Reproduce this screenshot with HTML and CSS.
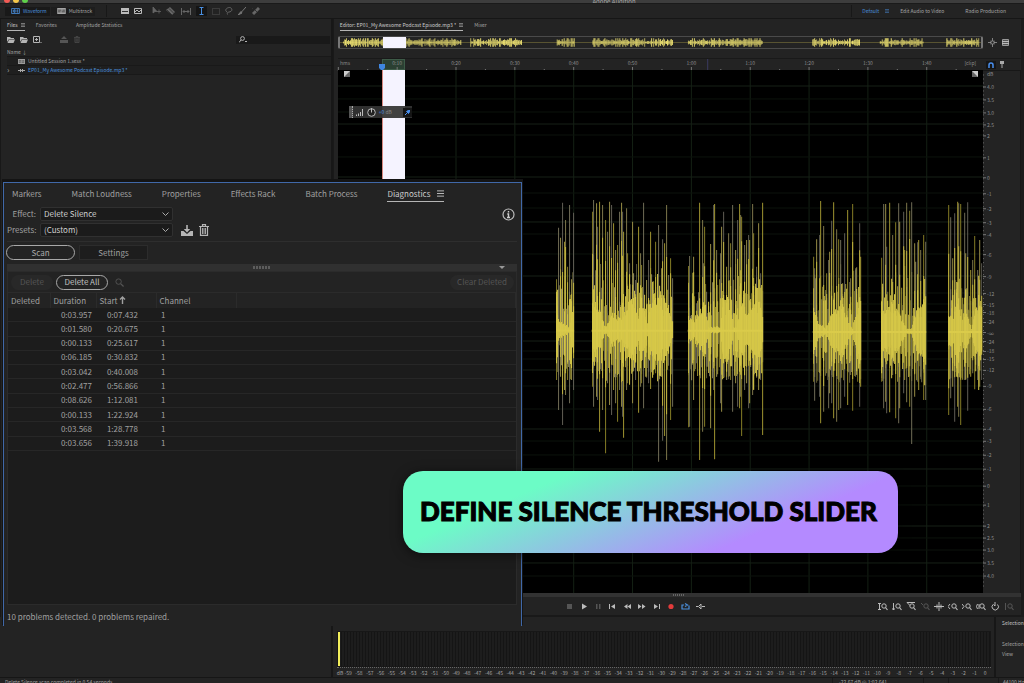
FILE: index.html
```html
<!DOCTYPE html>
<html lang="en">
<head>
<meta charset="utf-8">
<title>Adobe Audition</title>
<link rel="stylesheet" href="styles.css">
</head>
<body>
<svg class="defs" aria-hidden="true">
  <symbol id="menu" viewBox="0 0 8 8"><path d="M0 1h8M0 4h8M0 7h8" stroke="currentColor" fill="none"/></symbol>
  <symbol id="wave" viewBox="0 0 10 7"><path d="M.5.5h9v6h-9z" stroke="currentColor" fill="none"/><path d="M2.500 2v3M4 1v5M5.500 2v3M7.500 1.500v4" stroke="currentColor"/></symbol>
  <symbol id="multi" viewBox="0 0 10 7"><path d="M0 0h10v7H0z" fill="currentColor"/><path d="M1 2.500h4M6 2.500h3M1 4.500h3M5 4.500h4" stroke="#333"/></symbol>
  <symbol id="mag" viewBox="0 0 10 10"><circle cx="4" cy="4" r="3" fill="none" stroke="currentColor"/><path d="M6.200 6.200 9.500 9.500" stroke="currentColor" stroke-width="1.400"/></symbol>
  <symbol id="folder" viewBox="0 0 8 6"><path d="M0 0h3l1 1h3v1H2L0 5z" fill="currentColor"/><path d="M2 2.500h6L6.500 6H.5z" fill="currentColor"/></symbol>
  <symbol id="trash" viewBox="0 0 10 12"><path d="M0 2.500h10M3.500 2V.7h3V2M1.500 3v8.300h7V3" fill="none" stroke="currentColor" stroke-width="1.200"/><path d="M3.500 4v6M5 4v6M6.500 4v6" stroke="currentColor" stroke-width=".9"/></symbol>
</svg>

<header class="titlebar">
  <span class="lights"><i class="red"></i><i class="amber"></i><i class="green"></i></span>
  <span class="title">Adobe Audition</span>
</header>

<nav class="toolbar">
  <div class="modes">
    <button class="mode on"><svg width="9" height="6"><use href="#wave"/></svg>Waveform</button>
    <button class="mode"><svg width="9" height="6"><use href="#multi"/></svg>Multitrack</button>
  </div>
  <div class="tools">
    <svg width="8" height="6" viewBox="0 0 8 6"><path d="M0 0h8v6H0z" fill="#bbb"/><path d="M1 3.500h6" stroke="#333"/></svg>
    <svg width="8" height="6" viewBox="0 0 8 6"><path d="M.5.5h7v5h-7zM1 4l2-2 2 2 2-2" fill="none" stroke="#bbb"/></svg>
    <svg class="dim gap" width="9" height="8" viewBox="0 0 9 8"><path d="M1 0v6l2-1.500h2zM5 4.500h4M7 2.500v4" fill="#666" stroke="#666" stroke-width=".8"/></svg>
    <svg width="10" height="8" viewBox="0 0 10 8"><path d="M0 3 4 0l5 5-3 3z" fill="#666"/><path d="m1 3 5 5M3 1.500l5 5" stroke="#222" stroke-width=".7"/></svg>
    <svg width="10" height="7" viewBox="0 0 10 7"><path d="M.5 0v7M9.500 0v7M2 3.500h6M3.500 2 2 3.500 3.500 5M6.500 2 8 3.500 6.500 5" fill="none" stroke="#666"/></svg>
    <span class="picked"><svg width="5" height="8" viewBox="0 0 5 8"><path d="M.5.5h4M2.500.5v7M.5 7.500h4" stroke="#4a90e2"/></svg></span>
    <svg width="8" height="7" viewBox="0 0 8 7"><path d="M.5.5h7v6h-7z" fill="none" stroke="#555" stroke-dasharray="1 1"/></svg>
    <svg width="8" height="8" viewBox="0 0 8 8"><path d="M2 5C-1 3 2 .5 4.500.5S8 4 5 4.800 2 5 2.500 7.500" fill="none" stroke="#666"/></svg>
    <svg width="8" height="8" viewBox="0 0 8 8"><path d="M8 0 3.500 5M3 4.500 0 8l4-2z" fill="#777" stroke="#777"/></svg>
    <svg width="9" height="8" viewBox="0 0 9 8"><path d="M8 1 2 7" stroke="#666" stroke-width="3"/><path d="M4 3l2 2M1 1l1 1" stroke="#333"/></svg>
  </div>
  <div class="spaces">
    <a href="#default" class="on">Default</a><svg class="on" width="4" height="4"><use href="#menu"/></svg>
    <a href="#video">Edit Audio to Video</a>
    <a href="#radio">Radio Production</a>
  </div>
</nav>

<main class="workspace">
  <section class="files">
    <div class="tabs small">
      <button class="tab on">Files <svg width="4" height="4"><use href="#menu"/></svg></button>
      <button class="tab">Favorites</button>
      <button class="tab">Amplitude Statistics</button>
    </div>
    <div class="filetools">
      <svg width="8" height="6"><use href="#folder"/></svg>
      <svg width="8" height="6"><use href="#folder"/></svg>
      <svg width="9" height="7" viewBox="0 0 9 7"><path d="M.5.5h6v6h-6zM3.500 2v3M2 3.500h3" fill="none" stroke="currentColor"/><path d="M7.500 6h1v1h-1z" fill="currentColor"/></svg>
      <svg class="dim gap" width="9" height="7" viewBox="0 0 9 7"><path d="M0 4h8v3H0zM4 0l3 3H1z" fill="currentColor"/></svg>
      <svg class="dim" width="6" height="7"><use href="#trash"/></svg>
      <label class="filter"><svg width="9" height="7" viewBox="0 0 9 7"><circle cx="3.500" cy="2.500" r="1.900" fill="none" stroke="currentColor"/><path d="M2 4 0 6.500M6 5.500h2" stroke="currentColor"/></svg><input type="text" aria-label="Search files"></label>
    </div>
    <div class="namehead">Name ↓</div>
    <ul class="filelist">
      <li><svg width="7" height="5"><use href="#multi"/></svg>Untitled Session 1.sesx *</li>
      <li class="on"><span class="twist">›</span><svg width="7" height="5" viewBox="0 0 7 5"><path d="M0 2.500h7M2.500 1v3M4.500 1v3" stroke="#aaa"/></svg>EP01_My Awesome Podcast Episode.mp3 *</li>
    </ul>
  </section>

  <section class="editor">
    <div class="tabs small">
      <button class="tab on">Editor: EP01_My Awesome Podcast Episode.mp3 * <svg width="4" height="4"><use href="#menu"/></svg></button>
      <button class="tab">Mixer</button>
    </div>
    <div class="overview">
      <div class="track"><svg id="mini" viewBox="0 0 1935 36" preserveAspectRatio="none"></svg><i class="range"></i></div>
      <div class="side">
        <svg width="9" height="9" viewBox="0 0 9 9"><path d="M0 4.500h9M4.500 0v9M3 2.500v4M6 2.500v4" stroke="#999" stroke-width=".8"/><circle cx="4.500" cy="4.500" r="1.500" fill="#232323" stroke="#999" stroke-width=".7"/></svg>
        <svg width="7" height="7" viewBox="0 0 7 7"><path d="M.5.5h6v6h-6z" fill="#555" stroke="#999"/><path d="M0 2.500h7M0 4.500h7" stroke="#bbb"/></svg>
      </div>
    </div>
    <div class="timeline">
      <div class="ruler"><i class="range"></i><svg id="ticks"></svg></div>
      <div class="side">
        <span class="snap"><svg width="6" height="6" viewBox="0 0 6 6"><path d="M1 6V3a2 2 0 0 1 4 0v3" fill="none" stroke="#4a90f0" stroke-width="1.500"/></svg></span>
        <svg width="4" height="7" viewBox="0 0 4 7"><path d="M0 0h4v3H2.500v4h-1V3H0z" fill="#aaa"/></svg>
      </div>
    </div>
    <div class="stage">
      <div class="canvas">
        <svg id="grid"></svg>
        <i class="range"></i>
        <svg id="waveform" viewBox="0 0 1935 1569" preserveAspectRatio="none"></svg>
        <svg class="fade left" viewBox="0 0 6 6"><path d="M0 0h6v6H0z" fill="#666"/><path d="M0 0h6L0 6z" fill="#ccc"/></svg>
        <svg class="fade right" viewBox="0 0 6 6"><path d="M0 0h6v6H0z" fill="#666"/><path d="M0 0h6v6z" fill="#ccc"/></svg>
        <div class="hud">
          <span class="grip"></span>
          <svg width="8" height="7" viewBox="0 0 8 7"><path d="M.5 5.500V7M2.500 4.500V7M4.500 3v4M6.500 0v7" stroke="#bbb"/></svg>
          <svg width="9" height="9" viewBox="0 0 9 9"><circle cx="4.500" cy="4.500" r="3.800" fill="#222" stroke="#bbb"/><path d="M4.500 0v4.500" stroke="#bbb"/></svg>
          <span class="gain">+0 <em>dB</em></span>
          <span class="pin"><svg width="5" height="5" viewBox="0 0 5 5"><path d="M0 5 2 3M1.500 1.500l2 2L5 1 4 0z" stroke="#4a90f0" fill="#4a90f0"/></svg></span>
        </div>
      </div>
      <svg id="db"></svg>
    </div>
    <div class="scroll"><i></i></div>
    <div class="transport">
      <div class="play" id="play"></div>
      <div class="zooms" id="zooms"></div>
    </div>
  </section>
</main>

<section class="dock">
  <div class="blank"></div>
  <div class="levels">
    <div class="meter"><i></i></div>
    <div class="scale" id="scale"><span class="unit">dB</span></div>
  </div>
  <div class="selview"><b>Selection</b><span>Selection</span><span>View</span></div>
</section>

<footer class="status">
  <span>Delete Silence scan completed in 0.54 seconds</span>
  <span class="level">-22.67 dB @ 1:02.641</span><span class="cell"></span><span class="cell wide"></span><span class="rate">44100 Hz</span>
</footer>

<section class="diag">
  <div class="tabs">
    <button class="tab">Markers</button>
    <button class="tab">Match Loudness</button>
    <button class="tab">Properties</button>
    <button class="tab">Effects Rack</button>
    <button class="tab">Batch Process</button>
    <button class="tab on">Diagnostics <svg width="7" height="7"><use href="#menu"/></svg></button>
  </div>
  <div class="form">
    <label for="effect">Effect:</label>
    <select id="effect"><option>Delete Silence</option></select>
    <svg class="info" width="13" height="13" viewBox="0 0 13 13"><circle cx="6.500" cy="6.500" r="5.500" fill="none" stroke="#bbb" stroke-width="1.200"/><path d="M6.500 3v1.500M5.300 6h1.200v3.500M5 9.500h3" stroke="#ccc" stroke-width="1.400" fill="none"/></svg>
    <label for="preset">Presets:</label>
    <select id="preset"><option>(Custom)</option></select>
    <span class="presettools">
      <button class="icon" aria-label="Save preset"><svg width="12" height="11" viewBox="0 0 12 11"><path d="M5.200 0h1.600v4h2.400L6 7.500 2.800 4h2.400z" fill="currentColor"/><path d="M0 6h2.500L6 9l3.500-3H12v5H0z" fill="currentColor"/></svg></button>
      <button class="icon" aria-label="Delete preset"><svg width="10" height="12"><use href="#trash"/></svg></button>
    </span>
  </div>
  <div class="modesrow"><button class="pill big">Scan</button><button class="flat">Settings</button></div>
  <div class="split"><i></i><b></b></div>
  <div class="list">
    <div class="actions">
      <button class="ghost" disabled>Delete</button>
      <button class="pill all">Delete All</button>
      <svg class="find" width="9" height="9"><use href="#mag"/></svg>
      <button class="ghost last" disabled>Clear Deleted</button>
    </div>
    <table class="problems">
      <colgroup><col class="c1"><col class="c2"><col class="c3"><col class="c4"><col></colgroup>
      <thead><tr><th>Deleted</th><th>Duration</th><th>Start<svg width="7" height="8" viewBox="0 0 7 8"><path d="M3.500 8V1M1 3.500 3.500 1 6 3.500" fill="none" stroke="currentColor" stroke-width="1.400"/></svg></th><th>Channel</th><th></th></tr></thead>
      <tbody>
        <tr><td></td><td>0:03.957</td><td>0:07.432</td><td>1</td><td></td></tr>
        <tr><td></td><td>0:01.580</td><td>0:20.675</td><td>1</td><td></td></tr>
        <tr><td></td><td>0:00.133</td><td>0:25.617</td><td>1</td><td></td></tr>
        <tr><td></td><td>0:06.185</td><td>0:30.832</td><td>1</td><td></td></tr>
        <tr><td></td><td>0:03.042</td><td>0:40.008</td><td>1</td><td></td></tr>
        <tr><td></td><td>0:02.477</td><td>0:56.866</td><td>1</td><td></td></tr>
        <tr><td></td><td>0:08.626</td><td>1:12.081</td><td>1</td><td></td></tr>
        <tr><td></td><td>0:00.133</td><td>1:22.924</td><td>1</td><td></td></tr>
        <tr><td></td><td>0:03.568</td><td>1:28.778</td><td>1</td><td></td></tr>
        <tr><td></td><td>0:03.656</td><td>1:39.918</td><td>1</td><td></td></tr>
      </tbody>
    </table>
  </div>
  <p class="result">10 problems detected. 0 problems repaired.</p>
</section>

<h1 class="callout">DEFINE SILENCE THRESHOLD SLIDER</h1>
<script src="app.js"></script>
</body>
</html>
```
FILE: styles.css
```css
* { box-sizing: border-box; }
body {
  margin: 0; height: 100vh; display: flex; flex-direction: column; overflow: hidden; position: relative;
  background: #232323; color: #a4a4a4;
  font: 5px/8px "Noto Sans CJK SC", "Noto Sans", sans-serif;
}
button, input, select { font: inherit; color: inherit; background: none; border: 0; padding: 0; margin: 0; }
a { color: inherit; text-decoration: none; }
svg { flex: none; display: block; }
.defs { position: absolute; width: 0; height: 0; }
.on { color: #4a8fdc; }

.titlebar { flex: none; height: 4px; background: #3d3d3d; border-bottom: 1px solid #1a1a1a; overflow: hidden; position: relative; }
.lights { position: absolute; left: 4px; top: -3px; display: flex; gap: 3px; }
.lights i { width: 6px; height: 6px; border-radius: 50%; }
.red { background: #f35b55; } .amber { background: #f5c84b; } .green { background: #5fd04b; }
.title { display: block; text-align: center; padding-left: 204px; line-height: 3px; color: #aaa; white-space: nowrap; font-size: 6px; }

.toolbar { flex: none; height: 15px; display: flex; align-items: center; border-bottom: 1px solid #161616; padding: 0 18px 0 5px; }
.modes { display: flex; gap: 1px; padding-right: 11px; border-right: 1px solid #181818; height: 12px; align-items: center; }
.mode { display: flex; gap: 3px; align-items: center; height: 9px; padding: 0 3px 0 6px; background: #1d1d1d; }
.mode.on { background: #191919; }
.tools { display: flex; gap: 5px; align-items: center; padding-left: 14px; flex: 1; }
.tools .gap { margin-left: 5px; }
.picked { background: #151515; padding: 1px 3px; }
.spaces { display: flex; align-items: center; height: 12px; padding-left: 10px; border-left: 1px solid #181818; }
.spaces svg { margin: 0 11px 0 6px; }
.spaces a + a { margin-left: 21px; }

.workspace { flex: 1; min-height: 0; display: grid; grid-template-columns: 32.5% minmax(0, 1fr); }
.files { border-right: 2px solid #171717; padding-left: 6px; border-left: 1px solid #181818; }
.tabs { display: flex; }
.tab { display: flex; align-items: center; white-space: nowrap; border-bottom: 1px solid transparent; }
.small .tab { height: 12px; gap: 3px; }
.tab.on { color: #ccc; border-color: #b5b5b5; }
.files .tabs { gap: 11px; }
.files .tab:last-child { margin-left: 8px; }
.filetools { display: flex; align-items: center; gap: 5px; height: 17px; color: #b5b5b5; }
.filetools .gap { margin-left: 13px; }
.dim { color: #555; }
.filter { margin-left: auto; width: 94px; height: 8px; background: #191919; display: flex; align-items: center; padding-left: 3px; margin-right: 1px; }
.filter input { flex: 1; min-width: 0; height: 8px; }
.namehead { height: 8px; line-height: 8px; }
.filelist { list-style: none; margin: 0; padding: 0; border-bottom: 1px solid #191919; }
.filelist li { height: 9px; border-top: 1px solid #191919; display: flex; align-items: center; gap: 3px; padding-left: 11px; background: #1f1f1f; }
.filelist li + li { padding-left: 0; }
.twist { width: 8px; color: #aaa; font-size: 8px; }

.editor { display: flex; flex-direction: column; min-width: 0; padding-left: 4px; border-left: 1px solid #191919; border-right: 3px solid #1b1b1b; }
.editor .tabs { gap: 11px; padding-left: 2px; }
.overview { display: flex; margin-top: 5px; height: 13px; }
.track { flex: 1; position: relative; border: 1px solid #4a4a4a; border-left: 2px solid #777; border-right: 2px solid #777; border-radius: 2px; }
.track svg { position: absolute; width: 100%; height: 100%; }
.side { width: 38px; display: flex; align-items: center; gap: 5px; padding-left: 5px; }
.range { position: absolute; width: 3.6%; left: 6.8%; top: 0; bottom: 0; background: #f5f3ff; }
.timeline { display: flex; height: 12px; margin-top: 9px; border-top: 1px solid #191919; }
.timeline .side { gap: 4px; padding-left: 3px; }
.ruler { flex: 1; position: relative; }
.ruler .range { background: #2b4033; border: 1px solid #3d5a47; }
.ruler svg { position: relative; width: 100%; height: 100%; overflow: visible; }
.snap { background: #161616; padding: 1px 2px; }
.stage { flex: 1; min-height: 0; display: flex; }
.canvas { flex: 1; position: relative; background: #000; }
.canvas .range { border-left: 1px solid #d98880; }
#grid, #waveform { position: absolute; width: 100%; height: 100%; }
#db { width: 38px; height: 100%; border-top: 1px solid #171717; border-right: 1px solid #171717; }
text { fill: #8c8c8c; font-size: 5px; }
.fade { position: absolute; top: 1px; width: 6px; height: 6px; }
.fade.left { left: 6px; } .fade.right { right: 5px; }
.hud { position: absolute; left: 11px; top: 36px; height: 12px; display: flex; align-items: center; gap: 3px; background: #333e; }
.grip { width: 4px; height: 12px; background: #555; border-right: 1px dotted #aaa; }
.gain { color: #4a90e2; padding-right: 8px; } .gain em { color: #888; font-style: normal; }
.pin { background: #151515; padding: 2px; }
.scroll { height: 4px; background: #323232; display: flex; justify-content: center; align-items: center; }
.scroll i { width: 12px; height: 2px; background: repeating-linear-gradient(90deg, #666 0 1px, #323232 1px 2px); }
.transport { height: 20px; display: flex; align-items: center; border-bottom: 2px solid #191919; color: #bbb; }
.play { display: flex; align-items: center; gap: 6px; padding-left: 228px; flex: 1; }
.zooms { display: flex; gap: 4px; padding-right: 7px; }
.off { color: #555; }

.dock { flex: none; height: 60px; display: grid; grid-template-columns: 32.5% minmax(0, 1fr) 28px; }
.blank { border-right: 2px solid #171717; }
.levels { padding: 14px 3px 0 4px; border-right: 2px solid #171717; }
.meter { height: 36px; border: 1px solid #171717; background: repeating-linear-gradient(90deg, #151515 0 1px, #1d1d1d 1px 3px); }
.meter i { display: block; width: 2px; height: 34px; background: #f2ee5a; }
.scale { display: flex; height: 10px; border-top: 1px dotted #666; font-size: 5px; line-height: 9px; }
.scale span { flex: 1 1 0; min-width: 0; text-align: center; }
.scale .unit { flex: none; width: 6px; }
.selview { display: flex; flex-direction: column; padding-left: 6px; white-space: nowrap; line-height: 10px; }
.selview b { font-weight: 400; color: #c4c4c4; padding: 1px 0 11px; }
.status { flex: none; height: 6px; border-top: 1px solid #161616; display: flex; overflow: hidden; padding-left: 5px; white-space: nowrap; }
.status span:first-child { flex: 1; }
.level { width: 91px; padding-left: 6px; border-left: 1px solid #181818; }
.cell { width: 25px; border-left: 1px solid #181818; }
.cell.wide { width: 50px; }
.rate { width: 26px; padding-left: 4px; border-left: 1px solid #181818; }

.diag {
  position: absolute; left: 3px; top: 182px; bottom: 57px; width: 519px; display: flex; flex-direction: column;
  background: #232323; border: solid #4068a8; border-width: 1px 1px 0; box-shadow: 0 -2px 0 1px #141414;
  font-size: 8px; line-height: 12px; padding: 0 4px 0 3px; color: #a0a0a0;
}
.diag .tabs { gap: 30px; padding: 3px 5px 0; height: 19px; }
.diag .tab { height: 16px; gap: 7px; }
.form { display: grid; grid-template-columns: 30px 133px 1fr; column-gap: 3px; row-gap: 2px; padding: 5px 2px 4px 0; align-items: center; border-bottom: 1px solid #2e2e2e; }
.form label { text-align: right; margin-right: 1px; white-space: nowrap; }
.form select {
  height: 14px; appearance: none; border: 1px solid #303030; border-radius: 2px; padding-left: 3px; color: #d0d0d0; line-height: 12px;
  background: #1b1b1b url("data:image/svg+xml,%3Csvg xmlns='http://www.w3.org/2000/svg' width='7' height='5'%3E%3Cpath d='M.5.5l3 3 3-3' fill='none' stroke='%23aaa'/%3E%3C/svg%3E") no-repeat right 3px center;
}
.info { justify-self: end; }
.presettools { display: flex; gap: 6px; padding-left: 5px; }
.icon { color: #b5b5b5; }
.modesrow { display: flex; gap: 4px; padding: 3px 0 4px; }
.pill { height: 15px; border: 1px solid #a8a8a8; border-radius: 8px; line-height: 12px; color: #c0c0c0; }
.pill.all { width: 52px; }
.pill.big { width: 69px; color: #aaa; margin-left: -1px; }
.flat { width: 69px; height: 15px; border: 1px solid #2c2c2c; background: #1d1d1d; line-height: 12px; }
.split { height: 7px; background: #303030; display: flex; align-items: center; justify-content: center; position: relative; }
.split i { width: 18px; height: 3px; background: repeating-linear-gradient(90deg, #5c5c5c 0 2px, #303030 2px 3px); }
.split b { position: absolute; right: 12px; top: 2px; border: 3px solid transparent; border-top-color: #999; border-bottom: 0; }
.list { flex: 1; min-height: 0; background: #1c1c1c; border: 1px solid #2b2b2b; }
.actions { background: #232323; display: flex; align-items: center; gap: 3px; height: 21px; padding: 0 2px 0 3px; border-bottom: 1px solid #2b2b2b; }
.ghost { width: 42px; height: 15px; border-radius: 8px; background: #282828; color: #555; line-height: 14px; }
.ghost.last { margin-left: auto; width: 64px; }
.find { color: #555; margin-left: 4px; }
.problems { width: 100%; height: 158px; border-collapse: collapse; table-layout: fixed; }
.problems thead tr { background: #232323; height: 15px; }
.c1 { width: 42px; } .c2 { width: 46px; } .c3 { width: 60px; } .c4 { width: 80px; }
th { font-weight: 400; text-align: left; padding: 0 0 0 3px; border-right: 1px solid #2b2b2b; white-space: nowrap; }
th svg { display: inline-block; margin-left: 1px; }
td { padding: 0; border-bottom: 1px solid #272727; }
td:nth-child(2) { text-align: right; padding-right: 4px; }
td:nth-child(3) { text-align: right; padding-right: 18px; }
td:nth-child(4) { padding-left: 5px; }
.result { margin: 0; height: 21px; line-height: 24px; }

.callout {
  position: absolute; left: 403px; top: 471px; margin: 0; padding: 20px 21px 22px 17px; border-radius: 20px;
  background: linear-gradient(157deg, #6cfcc6 25%, #b48aff 73%); box-shadow: 0 2px 12px #0008;
  color: #000; font: 900 26px/40px Lato, sans-serif; -webkit-text-stroke: 1px #000; white-space: nowrap;
}
```
FILE: app.js
```js
const $ = id => document.getElementById(id);
let seed = 7;
const rnd = () => (seed = (seed * 16807) % 2147483647) / 2147483647;

// Peaks as [x, top, bottom]; each group is offset to the clip's own coordinates.
const groups = [
  { dx: 606, mid: 420, pts: [
    [[49,268,570],[55,113,660],[60,143,560],[66,38,705],[72,155,600],[77,90,615],[83,230,570],[89,45,640],[94,268,570],[100,68,600]],
    [[156,65,590],[160,30,650],[168,40,620],[173,110,630],[178,35,725],[186,45,660],[196,90,790],[203,125,580],[207,35,645],[215,45,675],[219,100,600],[226,180,640],[232,165,695],[239,65,600],[243,38,650],[247,65,680],[250,125,743],[258,55,600],[262,190,580],[268,220,570],[277,95,640],[285,270,570],[294,110,668],[300,190,590],[304,225,580],[311,38,655],[318,270,560],[325,210,580],[332,125,597],[340,300,540],[347,155,550],[354,105,815],[363,235,560],[368,148,752],[373,160,738],[378,45,810],[390,205,690],[396,265,650]],
    [[444,228,712],[449,198,710],[460,200,630],[470,340,520],[478,38,810],[487,90,725],[492,110,710],[500,305,530],[511,162,715],[520,45,600],[523,42,808],[528,180,560],[533,285,540],[540,190,640],[545,110,665],[550,65,560],[558,230,560],[566,130,560],[570,160,570],[576,45,665],[585,180,580],[591,90,650],[597,42,655],[600,75,620],[604,80,738],[612,165,600],[618,150,580],[625,135,655],[629,150,640],[636,42,615],[641,130,600],[648,230,560],[655,100,600],[660,250,570],[666,38,735]] ] },
  { dx: 1326, mid: 424, pts: [
    [[99,200,575],[103,235,632],[110,148,520],[117,135,620],[122,33,700],[130,108,665],[138,250,550],[145,210,655],[149,185,610],[155,92,640],[160,37,685],[169,118,695],[175,148,660],[180,150,655],[187,280,540],[193,130,620],[202,60,645],[211,265,555],[218,42,662],[226,235,560],[230,232,555],[238,100,650],[241,200,590]],
    [[305,203,575],[310,42,655],[317,42,635],[320,170,670],[329,38,667],[338,135,555],[347,97,685],[355,40,700],[358,95,655],[369,65,610],[374,180,570],[380,38,637],[389,62,650],[394,37,762],[403,160,620],[413,157,575],[416,150,600],[422,180,560],[431,135,630],[436,155,630]],
    [[505,45,675],[511,82,625],[517,205,590],[523,70,695],[532,35,650],[536,40,680],[542,42,705],[552,68,570],[557,190,570],[563,37,662],[570,240,560],[577,210,550],[584,138,598],[591,240,570],[598,150,590],[603,220,570]] ] }
];
const spikeColors = ['#8d8428', '#77735c', '#a0954a', '#67645a', '#a99d34', '#857d50'];
const softColors = ['#b3a73a', '#8f8960', '#99902f', '#d0c24a', '#7a7440', '#a59d70'];
const snap = x => Math.floor(x / 3) * 3 + 1.5;
const line = (x, a, b, w, c, o = 1) => `<path d="M${snap(x)} ${a.toFixed(0)}V${b.toFixed(0)}" stroke="${c}" stroke-width="${w}" opacity="${o.toFixed(2)}"/>`;
let out = '', minis = '';
const spans = [];
groups.forEach(g => g.pts.forEach(seg => {
  const x0 = seg[0][0], x1 = seg[seg.length - 1][0], m = g.mid + 360;
  spans.push([x0 + g.dx, x1 + g.dx]);
  for (let x = x0; x <= x1; x += 3) {
    const up = 40 + rnd() * rnd() * 190, down = 40 + rnd() * 115;
    out += line(x + g.dx, m - up, m + down, 3, softColors[Math.floor(rnd() * 6)], .6 + rnd() * .35);
  }
  seg.forEach(([x, t, b], i) => {
    const X = x + g.dx, T = t + 360, B = b + 360;
    out += line(X, T, B, 3, spikeColors[i % 6], .95);
    if (i % 3 !== 1) out += line(X, m - (m - T) * (.4 + rnd() * .4), m + (B - m) * (.4 + rnd() * .3), 3, '#cbbd40', .9);
  });
  // Loud syllables swell and fade between anchor points.
  let from = 40 + rnd() * 60, to = 20 + rnd() * 90, k = 0, len = 6;
  for (let x = x0; x <= x1 + 1; x += 3) {
    if (k++ >= len) { from = to; to = rnd() < .35 ? 8 : 30 + rnd() * 75; k = 1; len = 3 + Math.floor(rnd() * 6); }
    const c = Math.max(5, (from + (to - from) * k / len) * (.7 + rnd() * .5));
    out += line(x + g.dx, m - c * 1.15, m + c * 1.1, 3, '#dacb4a');
    if (rnd() < .3) out += line(x + g.dx, m - c - 30 - rnd() * 60, m + c + 30 + rnd() * 60, 3, '#d5c747');
  }
  out += `<path d="M${x0 + g.dx - 1} ${m + 2}H${x1 + g.dx + 2}" stroke="#dacb4a" stroke-width="6"/>`;
}));
$('waveform').innerHTML = out;

[[9, 130], [200, 366], [393, 546], ...spans].forEach(([a, b]) => {
  for (let x = a; x <= b; x += 3) {
    const h = rnd() < .2 ? 14 : 3 + rnd() * 8;
    minis += line(x, 18 - h, 18 + h, 3, '#fbee78', .65 + rnd() * .35);
  }
});
$('mini').innerHTML = '<path d="M0 18H1935" stroke="#77703a" stroke-width="2"/>' + minis;

// Time ruler and vertical grid: the clip lasts a little under 1:50.
let ticks = '<text x="2" y="6">hms</text><text x="98%" y="6" text-anchor="middle">[clip]</text>', grid = '';
for (let i = 0; i <= 21; i++) {
  const p = (i * 4.56 + .05).toFixed(2) + '%';
  ticks += `<line x1="${p}" x2="${p}" y1="${i % 2 ? 10 : 8}" y2="12" stroke="#777"/>`;
  if (i % 2 === 0 && i) {
    const s = i * 5;
    ticks += `<text x="${p}" y="6" text-anchor="middle">${Math.floor(s / 60)}:${String(s % 60).padStart(2, '0')}</text>`;
    grid += `<line x1="${p}" x2="${p}" y1="0" y2="100%" stroke="#142014"/>`;
  }
}
ticks += '<line x1="57.3%" x2="57.3%" y1="0" y2="12" stroke="#3a3a60"/><path d="M41 5h6v4l-3 3-3-3z" fill="#3f86e0"/>';
$('ticks').innerHTML = ticks;

// Amplitude marks measured from the top of a 523-unit tall clip.
const marks = [['4.0',16],['3.5',29],['3.0',42],['2.5',54],['2',65],['1',87],['0',107],['-1',123],['-2',138],['-3',152],['-4',164],['-6',184],['-9',206],['-12',223],['-15',234],['-18',242],['-24',252],['-∞',262],['-24',271],['-18',281],['-15',289],['-12',300],['-9',316],['-6',339],['-4',359],['-3',371],['-2',385],['-1',399],['0',416],['1',435],['2',456],['2.5',468],['3.0',480],['3.5',493],['4.0',506]];
let db = '<text x="4" y="5">dB</text>';
marks.forEach(([t, y], i) => {
  const p = (y / 5.23).toFixed(2) + '%';
  db += `<line x1="0" x2="3" y1="${p}" y2="${p}" stroke="#777"/><text x="4" y="${p}" dy="2">${t}</text>`;
  grid += `<line x1="0" x2="100%" y1="${p}" y2="${p}" stroke="${i % 3 ? '#0c130c' : '#172017'}"/>`;
});
for (let y = 4; y < 520; y += 4) db += `<line x1="0" x2="1" y1="${y / 5.23}%" y2="${y / 5.23}%" stroke="#666"/>`;
$('db').innerHTML = db;
$('grid').innerHTML = grid;

for (let i = -59; i <= 0; i++) $('scale').insertAdjacentHTML('beforeend', `<span>${i}</span>`);

const icon = (name, w, body, cls = '') => `<button class="${cls}" aria-label="${name}"><svg width="${w}" height="9" viewBox="0 0 ${w} 9">${body}</svg></button>`;
const f = d => `<path d="${d}" fill="currentColor"/>`;
const s = d => `<path d="${d}" fill="none" stroke="currentColor"/>`;
$('play').innerHTML =
  icon('Stop', 8, f('M1 2h5v5H1z'), 'off') + icon('Play', 8, f('M2 1.500 7 4.500 2 7.500z')) + icon('Pause', 8, f('M2 2h1.500v5H2zM5 2h1.500v5H5z'), 'off') +
  icon('To start', 9, f('M1 2h1v5H1zM7 2v5L3 4.500z')) + icon('Rewind', 9, f('M4.500 2v5L1 4.500zM8 2v5L4.500 4.500z')) +
  icon('Forward', 8, f('M0 2l3.500 2.500L0 7zM4 2l3.500 2.500L4 7z')) + icon('To end', 9, f('M2 2l4 2.500L2 7zM7 2h1v5H7z')) +
  icon('Record', 8, '<circle cx="4" cy="4.500" r="2.600" fill="#e23b3b"/>') +
  icon('Loop', 9, '<path d="M3 3H1v4h7V3.500M4 1.500 6.500 3 4 4.500" fill="none" stroke="#4a8fdc" stroke-width="1.200"/>') +
  icon('Skip', 9, s('M0 4.500h2M6 4.500h3M5 2 2.500 4.500 5 7z'));
const lens = '<circle cx="6" cy="4" r="2.200" fill="none" stroke="currentColor"/><path d="M7.500 5.500 9.500 8" stroke="currentColor" stroke-width="1.200"/>';
$('zooms').innerHTML = [s('M1.500 1v7M0 1.500h3M0 7.500h3') + lens, s('M1.500 1v7M0 7h3') + lens, s('M1 .5h8M1 .5l3 3') + lens, s('M1 1l2 2') + lens,
  s('M0 4.500h10M5 0v9M3 2.500v4M7 2.500v4'), s('M2 2 0 4.500 2 7') + lens, s('M0 2l2 2.500L0 7') + lens, s('M1.500 2 .5 4.500 1.500 7M3 2v5') + lens,
  s('M5 0v4L3.500 2.500M3 2.500a3.200 3.200 0 1 0 4.500 0'), s('M1.500 1v7') + lens]
  .map((b, i) => icon('Zoom ' + (i + 1), 10, b, i === 3 || i === 9 ? 'off' : '')).join('');
```
